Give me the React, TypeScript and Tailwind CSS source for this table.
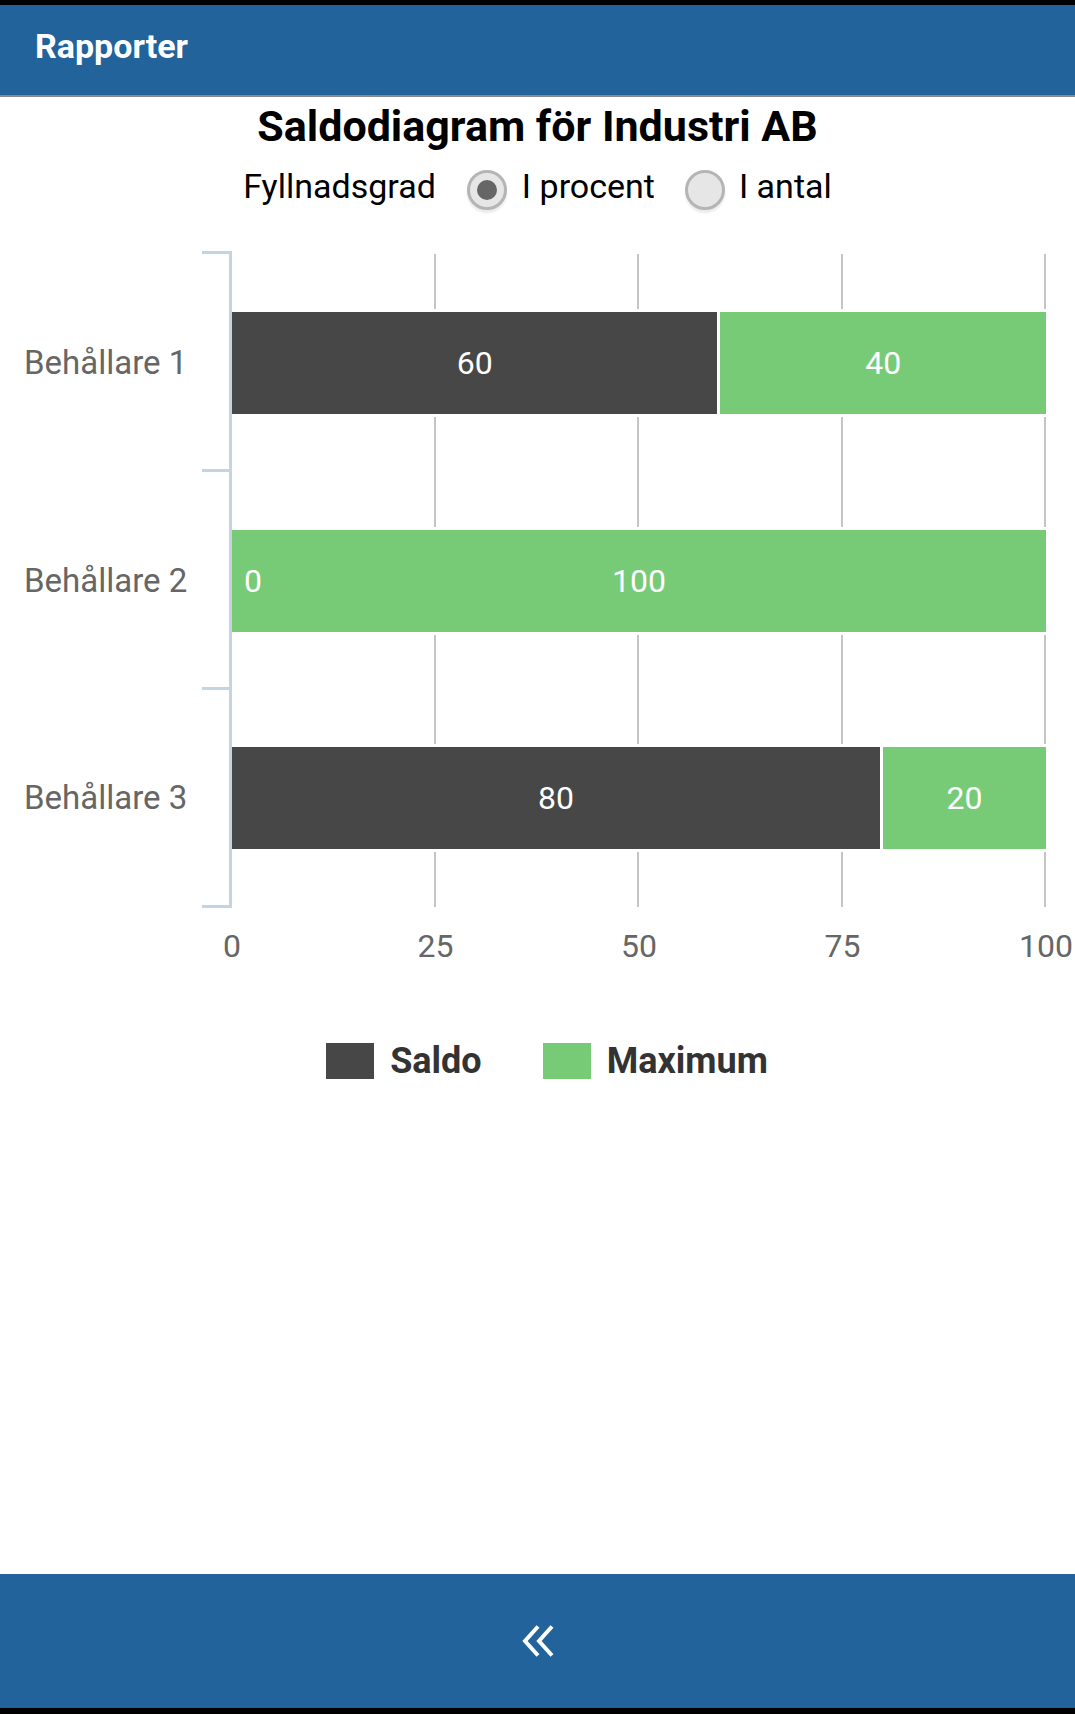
import React from "react";

const rows = [
  { name: "Behållare 1", saldo: 60, max: 40 },
  { name: "Behållare 2", saldo: 0, max: 100 },
  { name: "Behållare 3", saldo: 80, max: 20 },
];

const ticks = ["0", "25", "50", "75", "100"];

function Radio({ checked }: { checked?: boolean }) {
  return (
    <span className="w-[40px] h-[40px] rounded-full border-[3px] border-[#b5b5b5] bg-[#e6e6e6] shadow-[0_3px_2px_rgba(0,0,0,0.08)] flex items-center justify-center">
      {checked && <span className="w-[20px] h-[20px] rounded-full bg-[#666666]" />}
    </span>
  );
}

function Bar({ saldo, max }: { saldo: number; max: number }) {
  return (
    <div className="relative flex h-[102px] w-full">
      {saldo > 0 && (
        <div
          className="h-full bg-[#474747] border-r-[3px] border-white flex items-center justify-center text-white text-[32px]"
          style={{ width: `${saldo}%` }}
        >
          {saldo}
        </div>
      )}
      {saldo === 0 && (
        <span className="absolute left-[12px] top-0 h-full flex items-center text-white text-[32px]">0</span>
      )}
      <div
        className="h-full bg-[#77cb77] flex items-center justify-center text-white text-[32px]"
        style={{ width: `${max}%` }}
      >
        {max}
      </div>
    </div>
  );
}

export default function App() {
  return (
    <div className="w-full h-[1714px] flex flex-col bg-white font-[Roboto,sans-serif]">
      <div className="h-[5px] bg-black" />
      <header className="h-[92px] bg-[#21639a] border-b-2 border-[#8a8a8a] flex items-center pl-[35px] pb-[8px]">
        <span className="text-white text-[34px] font-bold">Rapporter</span>
      </header>

      <main className="flex-1 flex flex-col">
        <h1 className="mt-[5px] text-center text-[43px] leading-[48px] font-bold text-black">
          Saldodiagram för Industri AB
        </h1>

        <div className="mt-[14px] h-[44px] flex items-center justify-center text-[34px] text-black">
          <span>Fyllnadsgrad</span>
          <span className="ml-[31px] mt-[8px]">
            <Radio checked />
          </span>
          <span className="ml-[15px]">I procent</span>
          <span className="ml-[30px] mt-[8px]">
            <Radio />
          </span>
          <span className="ml-[14px]">I antal</span>
        </div>

        <div className="mt-[43px] flex">
          <div className="w-[202px] pt-[3px] flex flex-col">
            {rows.map((r) => (
              <div key={r.name} className="h-[217.67px] flex items-center pl-[24px] text-[33px] text-[#666666]">
                {r.name}
              </div>
            ))}
          </div>
          <div className="w-[27px] flex flex-col">
            <div className="h-[218px] border-t-[3px] border-[#c5d4e3]" />
            <div className="h-[218px] border-t-[3px] border-[#c5d4e3]" />
            <div className="h-[221px] border-t-[3px] border-b-[3px] border-[#c5d4e3]" />
          </div>
          <div className="w-[3px] h-[657px] bg-[#c5d4e3]" />
          <div className="relative mt-[3px] w-[814px] h-[653px] grid grid-cols-4">
            <div className="border-r-2 border-[#c4c4c4]" />
            <div className="border-r-2 border-[#c4c4c4]" />
            <div className="border-r-2 border-[#c4c4c4]" />
            <div className="border-r-2 border-[#c4c4c4]" />
            <div className="absolute inset-0 flex flex-col">
              {rows.map((r) => (
                <div key={r.name} className="flex-1 flex items-center">
                  <div className="w-full py-[3px] bg-white">
                    <Bar saldo={r.saldo} max={r.max} />
                  </div>
                </div>
              ))}
            </div>
          </div>
        </div>

        <div className="mt-[19px] ml-[232px] w-[814px] flex justify-between text-[32px] leading-[38px] text-[#666666]">
          {ticks.map((t) => (
            <div key={t} className="w-0 flex justify-center">
              <span className="whitespace-nowrap">{t}</span>
            </div>
          ))}
        </div>

        <div className="mt-[76px] h-[40px] flex items-center justify-center pl-[19px] text-[36px] font-bold text-[#333333]">
          <div className="flex items-center gap-[16px]">
            <span className="w-[48px] h-[36px] bg-[#474747]" />
            <span>Saldo</span>
          </div>
          <div className="flex items-center gap-[16px] ml-[61px]">
            <span className="w-[48px] h-[36px] bg-[#77cb77]" />
            <span>Maximum</span>
          </div>
        </div>
      </main>

      <footer className="h-[134px] bg-[#21639a] flex items-center justify-center">
        <svg width="34" height="34" viewBox="0 0 34 34" fill="none" stroke="white" strokeWidth="4">
          <polyline points="17,2.5 4,17 17,31.5" />
          <polyline points="31,2.5 18,17 31,31.5" />
        </svg>
      </footer>
      <div className="h-[6px] bg-black" />
    </div>
  );
}
